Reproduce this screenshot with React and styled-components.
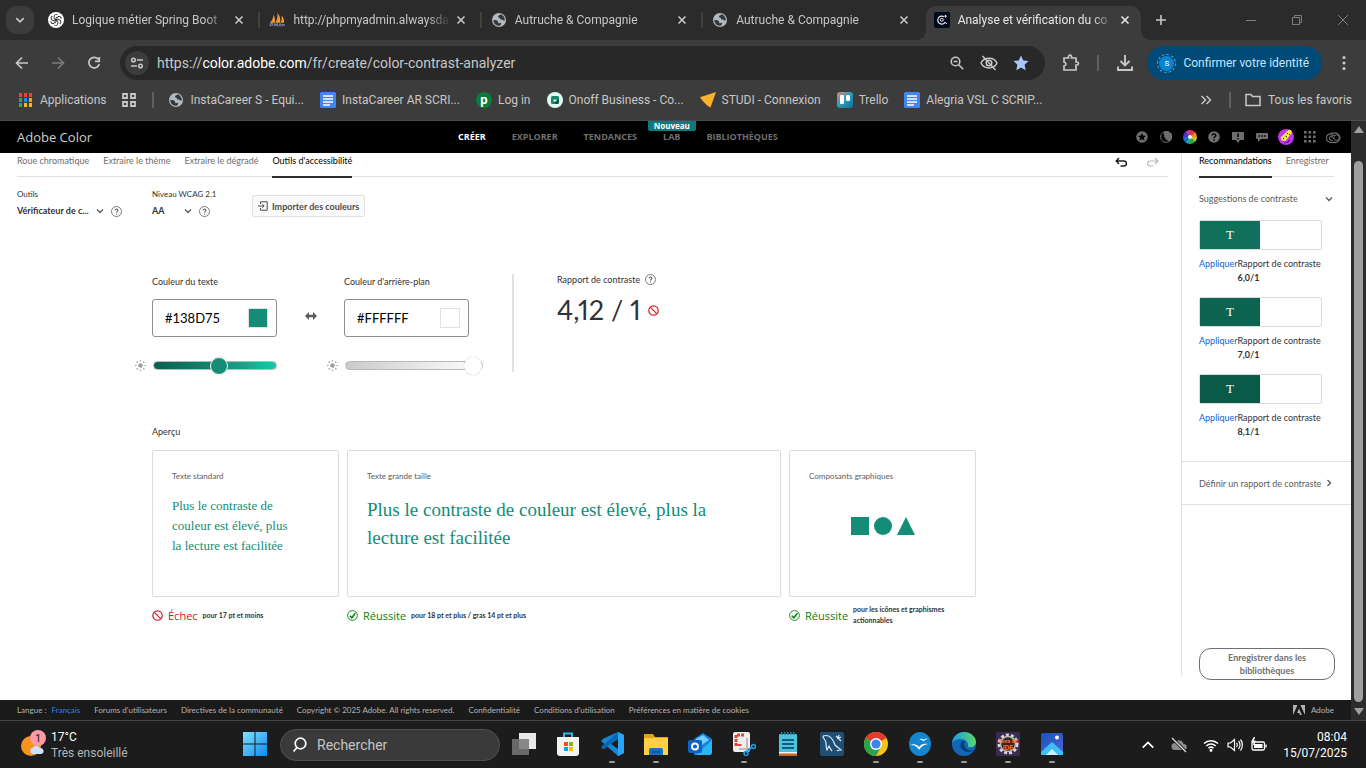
import React, { useState } from "react";
import styled, { createGlobalStyle, css } from "styled-components";

const ui = `Roboto, "Open Sans", sans-serif`;
const clean = `Lato, "Open Sans", sans-serif`;

const GlobalStyle = createGlobalStyle`
  *, *::before, *::after { box-sizing: border-box; }
  body { margin: 0; background: #1c1c1c; font-family: ${ui}; }
  button, input, select { font: inherit; color: inherit; margin: 0; padding: 0; border: 0; background: none; }
  button { cursor: pointer; }
  a { color: inherit; text-decoration: none; }
  svg { display: block; flex: none; }
  p, h1, h2, h3, ul { margin: 0; padding: 0; font-weight: inherit; font-size: inherit; }
`;

const Window = styled.div`
  display: flex;
  flex-direction: column;
  min-height: 100vh;
`;

/* ---------- browser: tab strip ---------- */

const TabStrip = styled.div`
  display: flex;
  align-items: flex-end;
  height: 40px;
  padding-left: 6px;
  background: #2b2b2b;
  color: #c7c7c7;
  font-size: 12px;
`;
const TabSearch = styled.button`
  display: grid;
  place-items: center;
  width: 28px;
  height: 28px;
  margin: 0 6px 6px 0;
  border-radius: 10px;
  background: #3c3c3c;
`;
const Tabs = styled.div`
  display: flex;
  flex: 0 1 1107px;
  min-width: 0;
`;
const TabCell = styled.div`
  display: flex;
  align-items: center;
  flex: 1 1 0;
  min-width: 0;
`;
const TabBody = styled.div`
  position: relative;
  display: flex;
  align-items: center;
  flex: 1;
  min-width: 0;
  height: 34px;
  padding: 0 8px 6px;
  ${(p) =>
    p.$active &&
    css`
      background: #3c3c3c;
      border-radius: 10px 10px 0 0;
      color: #e6e6e6;
      &::before,
      &::after {
        content: "";
        position: absolute;
        bottom: 0;
        width: 10px;
        height: 10px;
      }
      &::before {
        left: -10px;
        background: radial-gradient(circle at 0 0, transparent 10px, #3c3c3c 10px);
      }
      &::after {
        right: -10px;
        background: radial-gradient(circle at 100% 0, transparent 10px, #3c3c3c 10px);
      }
    `}
`;
const TabTitle = styled.span`
  flex: 1;
  min-width: 0;
  margin-left: 8px;
  overflow: hidden;
  white-space: nowrap;
  line-height: 18px;
  mask-image: linear-gradient(to right, #000 calc(100% - 24px), transparent);
`;
const TabClose = styled.button`
  display: grid;
  place-items: center;
  width: 16px;
  height: 16px;
  margin-left: 2px;
`;
const TabDivider = styled.span`
  width: 2px;
  height: 16px;
  margin: 0 1px 6px 3px;
  background: ${(p) => (p.$hidden ? "transparent" : "#414141")};
`;
const NewTab = styled.button`
  display: grid;
  place-items: center;
  width: 28px;
  height: 40px;
`;
const WindowControls = styled.div`
  display: flex;
  margin-left: auto;
  color: #7f7f7f;
`;
const WindowControl = styled.button`
  display: grid;
  place-items: center;
  width: 46px;
  height: 40px;
`;

/* ---------- browser: address bar ---------- */

const Toolbar = styled.div`
  display: flex;
  align-items: center;
  height: 46px;
  padding: 0 4px;
  background: #3c3c3c;
  color: #c7c7c7;
`;
const ToolButton = styled.button`
  display: grid;
  place-items: center;
  width: 36px;
  height: 34px;
  color: ${(p) => (p.$dim ? "#7c7c7c" : "inherit")};
`;
const AddressBar = styled.div`
  display: flex;
  align-items: center;
  flex: 1;
  height: 34px;
  margin: 0 8px;
  padding: 0 8px 0 5px;
  border-radius: 17px;
  background: #282828;
  font-size: 14px;
`;
const SiteInfo = styled.button`
  display: grid;
  place-items: center;
  width: 24px;
  height: 24px;
  margin-right: 8px;
  border-radius: 12px;
  background: #3c3c3c;
`;
const Url = styled.a`
  flex: 1;
  b { color: #fff; font-weight: 400; }
`;
const AddressIcon = styled.button`
  display: grid;
  place-items: center;
  width: 32px;
  height: 32px;
`;
const ToolDivider = styled.span`
  width: 2px;
  height: 16px;
  margin: 0 8px;
  background: #5f5f5f;
`;
const Profile = styled.button`
  display: flex;
  align-items: center;
  gap: 7px;
  height: 34px;
  margin: 0 4px;
  padding: 0 13px 0 10px;
  border-radius: 17px;
  background: #004a77;
  color: #c2e7ff;
  font-size: 12px;
`;
const ProfileRing = styled.span`
  display: grid;
  place-items: center;
  width: 19px;
  height: 19px;
  border: 1px dashed #6fa8cf;
  border-radius: 10px;
  span {
    width: 15px;
    height: 15px;
    border-radius: 8px;
    background: #0a84d0;
    color: #fff;
    font-size: 8px;
    line-height: 15px;
  }
`;

/* ---------- browser: bookmarks ---------- */

const Bookmarks = styled.nav`
  display: flex;
  align-items: center;
  height: 35px;
  padding: 0 14px 7px 18px;
  border-bottom: 1px solid #4b4b4b;
  background: #3c3c3c;
  color: #c7c7c7;
  font-size: 12px;
`;
const Bookmark = styled.a`
  display: flex;
  align-items: center;
  gap: 6px;
  margin-right: 16px;
  white-space: nowrap;
`;
const BookmarkDivider = styled.span`
  width: 2px;
  height: 16px;
  margin-right: 14px;
  background: #5f5f5f;
`;
const BookmarksEnd = styled.div`
  display: flex;
  align-items: center;
  margin-left: auto;
  > svg { margin-right: 17px; }
`;
const AllBookmarks = styled.button`
  display: flex;
  align-items: center;
  gap: 7px;
`;
const Badge = styled.span`
  display: grid;
  place-items: center;
  width: 16px;
  height: 16px;
  border-radius: 8px;
  background: #0b7b3e;
  color: #fff;
  font-size: 13px;
  font-weight: 700;
  line-height: 14px;
`;

/* ---------- page ---------- */

const Viewport = styled.div`
  display: flex;
  flex: 1;
  background: #fff;
`;
const Site = styled.div`
  display: flex;
  flex-direction: column;
  flex: 1;
  min-width: 0;
  font-family: ${clean};
  font-size: 9px;
  color: #323232;
`;
const SiteHeader = styled.header`
  display: flex;
  align-items: center;
  height: 32px;
  padding: 0 5px 0 17px;
  background: #000;
`;
const Brand = styled.a`
  width: 441px;
  color: #cfcfcf;
  font-family: "Open Sans", sans-serif;
  font-size: 13px;
`;
const MainNav = styled.nav`
  display: flex;
  align-items: center;
  gap: 26px;
  flex: 1;
`;
const NavLink = styled.a`
  position: relative;
  color: ${(p) => (p.$active ? "#fff" : "#6e6e6e")};
  font-family: "Open Sans", sans-serif;
  font-size: 9px;
  font-weight: 700;
  line-height: 12px;
`;
const NewBadge = styled.span`
  position: absolute;
  left: 50%;
  bottom: 12px;
  width: 48px;
  margin-left: -24px;
  border-radius: 0 0 2px 2px;
  background: #10797e;
  color: #fff;
  font-size: 8px;
  line-height: 10px;
  text-align: center;
`;
const HeaderTools = styled.div`
  display: flex;
  align-items: center;
  color: #6e6e6e;
`;
const HeaderTool = styled.button`
  display: grid;
  place-items: center;
  width: 24px;
  height: 24px;
`;

const Columns = styled.div`
  display: flex;
  flex: 1;
`;
const Main = styled.main`
  flex: 1;
  min-width: 0;
  margin-bottom: 24px;
  padding: 0 13px 0 17px;
  border-right: 1px solid #e1e1e1;
`;
const TabBar = styled.div`
  display: flex;
  gap: 14px;
  height: 24px;
  border-bottom: 1px solid #e1e1e1;
`;
const PageTab = styled.a`
  height: 25px;
  color: ${(p) => (p.$active ? "#000" : "#6e6e6e")};
  border-bottom: 2px solid ${(p) => (p.$active ? "#2c2c2c" : "transparent")};
  line-height: 16px;
  white-space: nowrap;
`;
const History = styled.div`
  display: flex;
  gap: 20px;
  margin-left: auto;
  padding-right: 9px;
  color: #1e1e1e;
  button { height: 20px; }
  button:disabled { color: #b8b8b8; }
`;
const Controls = styled.div`
  display: flex;
  padding-top: 11px;
`;
const Control = styled.div`
  width: ${(p) => p.$width}px;
  line-height: 12px;
  label { display: block; font-size: 8px; }
`;
const ControlRow = styled.div`
  display: flex;
  align-items: center;
  gap: 7px;
  height: 22px;
  svg { color: #5c5c5c; }
`;
const Select = styled.select`
  width: ${(p) => p.$width}px;
  appearance: none;
  font-weight: 700;
  color: #323232;
`;
const ImportButton = styled.button`
  display: flex;
  align-items: center;
  gap: 4px;
  height: 22px;
  margin-top: 7px;
  padding: 0 5px;
  border: 1px solid #e1e1e1;
  border-radius: 2px;
  background: #fafafa;
  font-weight: 700;
  color: #4b4b4b;
`;

const Checker = styled.section`
  display: flex;
  padding: 52px 0 0 118px;
`;
const ColorField = styled.div`
  width: 142px;
`;
const ColorLabel = styled.label`
  display: block;
  padding: 2px 0 0 17px;
  line-height: 12px;
`;
const ColorBox = styled.div`
  display: flex;
  align-items: center;
  height: 38px;
  margin: 11px 0 0 17px;
  padding: 0 8px 0 12px;
  border: 1px solid #8e8e8e;
  border-radius: 3px;
`;
const HexInput = styled.input`
  flex: 1;
  min-width: 0;
  color: #000;
  font-size: 13px;
  outline: 0;
`;
const Swatch = styled.button`
  width: 20px;
  height: 20px;
  border: 1px solid #e1e1e1;
  background: ${(p) => p.$color};
`;
const SliderRow = styled.div`
  display: flex;
  align-items: center;
  gap: 7px;
  height: 14px;
  margin-top: 21px;
  color: #a0a0a0;
`;
const Slider = styled.input`
  flex: none;
  appearance: none;
  width: ${(p) => p.$width}px;
  height: 20px;
  &::-webkit-slider-runnable-track {
    height: 9px;
    border: 1px solid #b9b9b9;
    border-radius: 5px;
    background: ${(p) => p.$track};
  }
  &::-webkit-slider-thumb {
    appearance: none;
    width: 18px;
    height: 18px;
    margin-top: -5px;
    border: 1px solid #fff;
    border-radius: 9px;
    background: ${(p) => p.$color};
    box-shadow: 0 0 1px rgba(0, 0, 0, 0.35);
  }
`;
const SwapButton = styled.button`
  display: grid;
  place-items: center;
  width: 50px;
  height: 20px;
  margin-top: 32px;
  padding-left: 18px;
  color: #5c5c5c;
`;
const Ratio = styled.div`
  margin-left: 43px;
  padding-left: 43px;
  border-left: 2px solid #e1e1e1;
`;
const RatioLabel = styled.div`
  display: flex;
  align-items: center;
  gap: 5px;
  height: 10px;
  svg { color: #5c5c5c; }
`;
const RatioValue = styled.div`
  display: flex;
  align-items: center;
  gap: 7px;
  margin-top: 8px;
  font-size: 27px;
  font-variant-numeric: proportional-nums;
  line-height: 36px;
`;

const Preview = styled.section`
  padding: 54px 0 0 135px;
  h2 { line-height: 12px; }
`;
const Cards = styled.div`
  display: grid;
  grid-template-columns: 187px 434px 187px;
  gap: 0 8px;
  margin-top: 12px;
`;
const Card = styled.article`
  height: 147px;
  padding: 19px;
  border: 1px solid #dcdcdc;
  border-radius: 2px;
  h3 { color: #5c5c5c; font-size: 8px; line-height: 12px; }
`;
const Sample = styled.p`
  width: ${(p) => (p.$large ? 360 : 124)}px;
  margin-top: 14px;
  color: #138d75;
  font-family: "Liberation Serif", serif;
  font-size: ${(p) => (p.$large ? 19 : 13)}px;
  line-height: ${(p) => (p.$large ? 28 : 20)}px;
`;
const Shapes = styled.div`
  display: flex;
  justify-content: center;
  margin-top: 35px;
`;
const Verdict = styled.div`
  display: flex;
  align-items: center;
  gap: 5px;
  height: 22px;
  margin-top: 7px;
  color: ${(p) => (p.$pass ? "#008505" : "#d0121f")};
  font-family: "Open Sans", sans-serif;
  font-size: 11px;
`;
const VerdictNote = styled.span`
  max-width: ${(p) => (p.$wide ? "none" : "100px")};
  color: #323232;
  font-family: ${clean};
  font-size: 7px;
  font-weight: 700;
  line-height: 11px;
`;

const Side = styled.aside`
  display: flex;
  flex-direction: column;
  width: 169px;
  padding-bottom: 20px;
`;
const SideTabs = styled(TabBar)`
  margin: 0 17px;
`;
const Disclosure = styled.button`
  display: flex;
  align-items: center;
  justify-content: space-between;
  height: 43px;
  padding: 0 18px 0 17px;
  color: #5c5c5c;
  ${(p) => p.$ruled && "height: 44px; margin-top: 22px; border: 1px solid #e1e1e1; border-width: 1px 0;"}
`;
const Suggestion = styled.div`
  padding: 0 29px 0 17px;
  & + & { margin-top: 12px; }
`;
const Pair = styled.div`
  display: flex;
  height: 30px;
  border: 1px solid #dcdcdc;
  border-radius: 2px;
  span {
    width: 60px;
    background: ${(p) => p.$color};
    color: #fff;
    font-family: "Liberation Serif", serif;
    font-size: 13px;
    line-height: 28px;
    text-align: center;
  }
`;
const Advice = styled.div`
  display: flex;
  margin-top: 7px;
  line-height: 14px;
  white-space: nowrap;
  button { align-self: flex-start; color: #0d5fd8; line-height: 14px; }
  b { display: block; }
`;
const SaveButton = styled.button`
  height: 32px;
  margin: auto 16px 0 17px;
  padding: 0 22px;
  border: 1px solid #6e6e6e;
  border-radius: 12px;
  color: #6e6e6e;
  font-weight: 700;
  line-height: 13px;
`;

const SiteFooter = styled.footer`
  display: flex;
  align-items: center;
  gap: 14px;
  height: 20px;
  padding: 0 17px;
  background: #1a1a1a;
  color: #b4b4b4;
  font-size: 8px;
  span a { margin-left: 3px; color: #2a83f5; }
`;
const AdobeMark = styled.a`
  display: flex;
  align-items: center;
  gap: 6px;
  margin-left: auto;
`;
const Scrollbar = styled.div`
  display: flex;
  flex-direction: column;
  align-items: center;
  width: 15px;
  padding: 5px 0;
  background: #2c2c2c;
  color: #9f9f9f;
  &::before, &::after {
    content: "";
    border: 5px solid transparent;
    border-top-width: 0;
    border-bottom: 7px solid currentColor;
  }
  &::after {
    border-top: 7px solid currentColor;
    border-bottom-width: 0;
  }
`;
const ScrollThumb = styled.div`
  flex: 1;
  width: 9px;
  margin: 28px 0 6px;
  border-radius: 5px;
  background: #9f9f9f;
`;

/* ---------- taskbar ---------- */

const Taskbar = styled.footer`
  display: flex;
  align-items: center;
  height: 48px;
  border-top: 1px solid #444;
  background: #1c1c1c;
  color: #fff;
  font-size: 12px;
`;
const Weather = styled.button`
  display: flex;
  align-items: center;
  gap: 5px;
  width: 233px;
  padding-left: 20px;
  line-height: 16px;
  text-align: left;
  small { display: block; color: #b5b5b5; font-size: 12px; }
`;
const TaskSlot = styled.button`
  display: flex;
  flex-direction: column;
  align-items: center;
  width: 44px;
  height: 47px;
  padding-top: 11px;
  &::after {
    content: "";
    width: 6px;
    height: 2px;
    margin-top: 5px;
    border-radius: 1px;
    background: ${(p) => (p.$open ? "#9a9a9a" : "transparent")};
  }
`;
const TaskSearch = styled.label`
  display: flex;
  align-items: center;
  gap: 9px;
  width: 220px;
  height: 32px;
  margin: 0 2px 0 3px;
  padding: 0 11px;
  border: 1px solid #505050;
  border-radius: 16px;
  background: #3a3a3a;
  input { min-width: 0; width: 160px; font-size: 14px; outline: 0; }
  input::placeholder { color: #c4c4c4; opacity: 1; }
`;
const Tray = styled.div`
  display: flex;
  align-items: center;
  gap: 8px;
  margin-left: auto;
  padding-right: 19px;
`;
const TrayButton = styled.button`
  margin-right: ${(p) => p.$space || 0}px;
`;
const Clock = styled.time`
  width: 64px;
  line-height: 16px;
  text-align: right;
  white-space: nowrap;
`;

/* ---------- icons ---------- */

const Line = ({ d, size = 16, w = 1.5, box = 16, children, ...rest }) => (
  <svg width={size} height={size} viewBox={`0 0 ${box} ${box}`} fill="none" stroke="currentColor" strokeWidth={w} {...rest}>
    {d && <path d={d} />}
    {children}
  </svg>
);
const Close = () => <Line size={10} box={10} w={1.6} d="M1.5 1.5l7 7M8.5 1.5l-7 7" />;
const Chevron = ({ dir = "down", size = 8, w = 1.4 }) => (
  <Line size={size} box={8} w={w} d={{ down: "M1 2.5l3 3 3-3", right: "M2.5 1l3 3-3 3", up: "M1 5.5l3-3 3 3" }[dir]} />
);
const Help = () => (
  <Line size={11} box={11} w={0.8}>
    <circle cx="5.5" cy="5.5" r="5" />
    <path d="M4.200 4.300c0-1.700 2.700-1.700 2.700 0 0 1-1.300 1.100-1.300 2.100M5.600 7.400v1.100" strokeWidth="1.100" />
  </Line>
);
const NoEntry = () => (
  <Line size={11} box={11} w={1.2} color="#d7202f">
    <circle cx="5.5" cy="5.5" r="4.700" />
    <path d="M2.200 2.200l6.600 6.600" />
  </Line>
);
const Pass = () => (
  <Line size={11} box={11} w={0.9}>
    <circle cx="5.5" cy="5.5" r="4.900" />
    <path d="M2.800 5.800l2 2 3.600-4.600" strokeWidth="1.500" />
  </Line>
);
const Globe = () => (
  <svg width="16" height="16" viewBox="0 0 16 16">
    <circle cx="8" cy="8" r="7" fill="#b4b9c0" />
    <path d="M2.300 8.300c1.500-.4 3.200-.3 4.200.4 1 .8.200 2 1.200 2.500 1 .4 1.400-1 2.300-.3.9.8-.7 1.600-.8 2.700C6 14.500 2.600 12.300 2.300 8.300zM9.600 2.300C9.300 3.400 7 3.200 7 4.700c0 1 1.500.7 1.800 1.500.3.9.4 1.400 1.500 1.300 1-.1 1.300.6 2 .9.6.2 1.200 0 1.500-.2.100-2.700-1.800-5.200-4.200-5.900z" fill="#34373b" />
  </svg>
);
const Doc = () => (
  <svg width="16" height="16" viewBox="0 0 16 16">
    <rect width="16" height="16" rx="1.5" fill="#4285f4" />
    <path d="M3 4h10M3 7h10M3 10h10M3 13h7" stroke="#fff" strokeWidth="1.5" />
  </svg>
);
const ChatGpt = () => (
  <svg width="16" height="16" viewBox="0 0 16 16">
    <circle cx="8" cy="8" r="8" fill="#fff" />
    <g fill="none" stroke="#222" strokeWidth="0.9">
      {[0, 60, 120, 180, 240, 300].map((a) => (
        <path key={a} transform={`rotate(${a} 8 8)`} d="M6.200 7V4.200a2 2 0 0 1 3.300-1.200M6.200 7l2.500 1.400" />
      ))}
    </g>
  </svg>
);
const PhpMyAdmin = () => (
  <svg width="16" height="16" viewBox="0 0 18 16">
    <path d="M1 11C4 8 5 5 5 2c2 3 2 6 1.500 9zM7 11c2.500-4 3-7 2.500-11 3 3 3.500 7 3 11zM13 11c1.500-2 1.500-5 1-8 2.500 2 3 5 3 8z" fill="#f29a2e" />
    <path d="M1 15l1-3h2v2H2M6 15l.5-3 1.500 2 1.500-2v3M11 15l1.500-3 1 3M15 15v-2h2v2" fill="none" stroke="#7c7fa8" strokeWidth="1.200" />
  </svg>
);
const ColorFav = () => (
  <svg width="16" height="16" viewBox="0 0 16 16">
    <rect width="16" height="16" rx="2" fill="#020a1f" />
    <path d="M10 4.800A4 4 0 1 0 11.300 10" fill="none" stroke="#e8e8e8" strokeWidth="1.200" />
    <circle cx="7.800" cy="7.800" r="1.500" fill="none" stroke="#e8e8e8" strokeWidth="1" />
    <path d="M11.500 3v2.500M10.300 4.200h2.500M11 10l1.800 2" stroke="#e8e8e8" strokeWidth="1" />
  </svg>
);
const AppsGrid = () => {
  const colors = ["#ea4335", "#ea4335", "#ea4335", "#34a853", "#1a8cff", "#f9a01b", "#34a853", "#fbbc04", "#fbbc04"];
  return (
    <svg width="16" height="14" viewBox="0 0 16 14">
      {colors.map((c, i) => (
        <rect key={i} x={1 + (i % 3) * 5} y={Math.floor(i / 3) * 5} width="3" height="4" fill={c} />
      ))}
    </svg>
  );
};
const Grid4 = () => (
  <Line size={14} box={14} w={1.8} d="M1 1h4v4H1zM9 1h4v4H9zM1 9h4v4H1zM9 9h4v4H9z" />
);
const Onoff = () => (
  <svg width="16" height="16" viewBox="0 0 16 16">
    <circle cx="8" cy="8" r="8" fill="#dffaf0" />
    <rect x="4" y="4" width="8" height="8" rx="1.5" fill="#128a66" />
    <path d="M8 8h4v2.500L10.500 12H8z" fill="#0b4f4a" />
    <path d="M6.500 7.500h3v2h-3z" fill="#dffaf0" />
  </svg>
);
const Studi = () => (
  <svg width="16" height="16" viewBox="0 0 16 16"><path d="M0 5.200L16 0l-5.500 15.500C7 14 2 8.500 0 5.200z" fill="#fbb12b" /></svg>
);
const Trello = () => (
  <svg width="16" height="16" viewBox="0 0 16 16">
    <defs><linearGradient id="tr" x2="1" y2="1"><stop stopColor="#e8836b" /><stop offset=".45" stopColor="#2ca0b8" /><stop offset="1" stopColor="#0d6fa0" /></linearGradient></defs>
    <rect width="16" height="16" rx="3" fill="url(#tr)" />
    <rect x="3" y="3" width="4" height="9" rx="1" fill="#fff" /><rect x="9" y="3" width="4" height="6" rx="1" fill="#fff" />
  </svg>
);
const WheelIcon = () => (
  <svg width="14" height="14" viewBox="0 0 14 14">
    {["#e8324a", "#f58a1f", "#b8c92a", "#2fa84a", "#18a7a0", "#1f6ae0", "#4736d0", "#b637c0"].map((c, i) => (
      <path key={c} transform={`rotate(${i * 45} 7 7)`} d="M7 7V0a7 7 0 0 1 4.950 2.050z" fill={c} />
    ))}
    <circle cx="7" cy="7" r="2" fill="#fff" />
  </svg>
);
const Avatar = () => (
  <svg width="16" height="16" viewBox="0 0 16 16">
    <circle cx="8" cy="8" r="8" fill="#c433f0" />
    <path d="M2.500 8.500L10.500 1c2-1 4 1 3 3.500l-6 7.500-4-.5z" fill="#f5e64a" />
    <path d="M5 9l1 1M9 4l1 1M11 5l1 1M7.500 7l1.500 1" stroke="#222" strokeWidth="1" />
    <path d="M6 14.500l2-2 1.500 1.500 1.500-3 1 1" fill="none" stroke="#4b1580" strokeWidth="1" />
  </svg>
);
const CreativeCloud = () => (
  <svg width="16" height="12" viewBox="0 0 16 12" fill="none" stroke="currentColor" strokeWidth="1.100">
    <path d="M4.500 11.400h6.200a4.800 4.800 0 1 0-3.300-9.200A4.800 4.800 0 0 0 3.900 2.900a4.300 4.300 0 0 0 .6 8.500z" />
    <path d="M8.800 8.300L6.600 6A1.900 1.900 0 1 0 5.200 9.300h1.600M8 5.500l.8-.8a2.700 2.700 0 1 1 0 3.900M4.500 4.200A3.500 3.500 0 0 1 8 4.600" />
  </svg>
);

/* ---------- data ---------- */

const tabs = [
  { icon: <ChatGpt />, title: "Logique métier Spring Boot" },
  { icon: <PhpMyAdmin />, title: "http://phpmyadmin.alwaysda" },
  { icon: <Globe />, title: "Autruche & Compagnie" },
  { icon: <Globe />, title: "Autruche & Compagnie" },
  { icon: <ColorFav />, title: "Analyse et vérification du co", active: true },
];
const bookmarks = [
  { icon: <Globe />, title: "InstaCareer S - Equi..." },
  { icon: <Doc />, title: "InstaCareer AR SCRI..." },
  { icon: <Badge>p</Badge>, title: "Log in" },
  { icon: <Onoff />, title: "Onoff Business - Co..." },
  { icon: <Studi />, title: "STUDI - Connexion" },
  { icon: <Trello />, title: "Trello" },
  { icon: <Doc />, title: "Alegria VSL C SCRIP..." },
];
const suggestions = [
  { color: "#10705c", ratio: "6,0/1" },
  { color: "#0c6450", ratio: "7,0/1" },
  { color: "#0a5a4a", ratio: "8,1/1" },
];
const footerLinks = ["Forums d'utilisateurs", "Directives de la communauté", "Copyright © 2025 Adobe. All rights reserved.", "Confidentialité", "Conditions d'utilisation", "Préférences en matière de cookies"];

const A = (children) => <svg width="24" height="24" viewBox="0 0 24 24">{children}</svg>;
const apps = [
  { name: "Vue des tâches", icon: A(<><rect x="7" y="1" width="17" height="16" fill="#e8e8e8" /><rect x="0" y="7" width="17" height="16" fill="#777" opacity=".85" /></>) },
  { name: "Store", icon: A(<><path d="M8 6V1.500h8V6" fill="none" stroke="#35b5ef" strokeWidth="2" /><path d="M1 5h22v16a3 3 0 0 1-3 3H4a3 3 0 0 1-3-3z" fill="#f4f4f4" /><path d="M8 10h4v4H8z" fill="#f25022" /><path d="M13 10h4v4h-4z" fill="#7fba00" /><path d="M8 15h4v4H8z" fill="#00a4ef" /><path d="M13 15h4v4h-4z" fill="#ffb900" /></>) },
  { name: "Visual Studio Code", open: true, icon: A(<><path d="M18 0l6 3v18l-6 3L1 9l2.500-2.500z" fill="#1487d4" /><path d="M18 0v6.500L3.500 17.500 1 15z" fill="#0a66b0" /><path d="M18 0l6 3v18l-6 3z" fill="#2aa5f5" /><path d="M18 7v10l-7-5z" fill="#1c1c1c" /></>) },
  { name: "Explorateur", open: true, icon: A(<><path d="M0 2h9l2 3h13v18H0z" fill="#e0a11b" /><path d="M0 6h24v17H0z" fill="#ffcf48" /><path d="M5 23v-5a2 2 0 0 1 2-2h10a2 2 0 0 1 2 2v5z" fill="#1272c4" /><path d="M8 20h8" stroke="#0b4f93" strokeWidth="1.500" /></>) },
  { name: "Outlook", icon: A(<><path d="M6 7l9-6 9 6v13a3 3 0 0 1-3 3H6z" fill="#1583dd" /><path d="M8 7l7-4 6 5-13 9z" fill="#6fd0ff" /><path d="M24 8v12a3 3 0 0 1-3 3H8z" fill="#28b5f0" /><rect y="8" width="14" height="13" rx="2" fill="#0d62c4" /><circle cx="7" cy="14.500" r="3" fill="none" stroke="#fff" strokeWidth="1.800" /></>) },
  { name: "Capture", open: true, icon: A(<><rect x="1" y="0" width="17" height="20" rx="2" fill="#eee" /><path d="M4 14V3h9" fill="none" stroke="#e2472d" strokeWidth="3" strokeDasharray="3 1" /><path d="M4.500 13h5" stroke="#e2472d" strokeWidth="2" /><path d="M15 6v10M7 17h10" stroke="#bbb" strokeWidth="2" /><path d="M14 20l6-5" stroke="#1b9de0" strokeWidth="2" /><circle cx="21.500" cy="14.500" r="2" fill="none" stroke="#1b9de0" strokeWidth="1.600" /><circle cx="14" cy="21.500" r="2" fill="none" stroke="#1b9de0" strokeWidth="1.600" /></>) },
  { name: "Bloc-notes", icon: A(<><rect x="3" y="2" width="18" height="22" rx="1" fill="#4ec3e0" /><rect x="3" y="21" width="18" height="3" fill="#c26a25" /><rect x="3" y="20" width="18" height="1.500" fill="#f3f3f3" /><path d="M6 8h12M6 12h12M6 16h12" stroke="#10627c" strokeWidth="1.800" /><path d="M5 1.500h14" stroke="#1a7d9c" strokeWidth="3" strokeDasharray="1.500 1.500" /></>) },
  { name: "MySQL Workbench", icon: A(<><rect x="0" y="0" width="24" height="24" rx="2" fill="#1f4f75" /><path d="M3 4c6-2 10 3 12 9 2 2 4 3 6 5-2 0-3 0-4 1M3 4c0 3 3 4 3 7s0 5 1 7l2-4c1 2 2 4 3 5M16 4l5 5M19 3l-1 3 3-1" fill="none" stroke="#dce9f2" strokeWidth="1.200" /></>) },
  { name: "Chrome", open: true, icon: A(<><circle cx="12" cy="12" r="12" fill="#fbc116" /><path d="M12 12L1.600 6A12 12 0 0 1 22.400 6z" fill="#e33b2e" /><path d="M1.600 6A12 12 0 0 0 12 24l5-9-5-3z" fill="#2ba24c" /><circle cx="12" cy="12" r="6" fill="#fff" /><circle cx="12" cy="12" r="4.600" fill="#3f82f0" /></>) },
  { name: "OpenOffice", open: true, icon: A(<><ellipse cx="12" cy="12" rx="11" ry="12" fill="#1286cf" /><path d="M11 7.500c2-1.500 3.500-.8 4.500.3 1-1 3-1.500 4.500-.8-2 .2-3.500 1-4.500 2.500-1-1.500-2.500-2-4.500-2zM2 13c4-1.500 7-.5 9 2 2-3 5-4 9-3-4 .5-7 2.500-9 6-2-4-5-5-9-5z" fill="#fff" /></>) },
  { name: "Edge", open: true, icon: A(<><defs><linearGradient id="ed" x2="1"><stop stopColor="#1b9de2" /><stop offset="1" stopColor="#57d66a" /></linearGradient></defs><circle cx="12" cy="12" r="12" fill="#1266b8" /><path d="M0 11C1 4 6 0 12 0c7 0 12 5 12 10 0 4-4 6-8 5 1-5-3-8-7-8-5 0-8 2-9 4z" fill="url(#ed)" /><path d="M10 9c-4 5 0 11 6 11 3 0 5-1 6-2-3 1-8 0-9-3-1-2-1-4 0-6z" fill="#0b3f7a" /></>) },
  { name: "Eclipse", open: true, icon: <svg width="24" height="24" viewBox="0 0 24 24"><rect width="24" height="24" rx="1" fill="#3c2a55" /><circle cx="12" cy="12" r="9" fill="none" stroke="#d8d4d0" strokeWidth="3" strokeDasharray="3 2" /><circle cx="12" cy="12" r="7.500" fill="#33242e" stroke="#bdb8b5" strokeWidth="1.500" /><text x="12" y="11" textAnchor="middle" fontSize="6" fontWeight="700" fill="#ee7a1c">Java EE</text><text x="12" y="18" textAnchor="middle" fontSize="7" fontWeight="700" fill="#ee7a1c">IDE</text></svg> },
  { name: "Photos", open: true, icon: A(<><defs><linearGradient id="ph" x2=".6" y2="1"><stop stopColor="#1556b8" /><stop offset="1" stopColor="#4d5fd8" /></linearGradient></defs><rect x="1" y="1" width="22" height="22" rx="2" fill="url(#ph)" /><path d="M1 20l11-10 11 10v3H1z" fill="#3fc0f5" /><path d="M6 23l6-6 6 6z" fill="#c9f0ff" /><circle cx="17" cy="5.500" r="2" fill="#fff" /></>) },
];

/* ---------- sections ---------- */

const BrowserChrome = () => (
  <>
    <TabStrip>
      <TabSearch aria-label="Rechercher dans les onglets"><Chevron size={10} /></TabSearch>
      <Tabs>
        {tabs.map((t, i) => (
          <TabCell key={i}>
            <TabBody $active={t.active}>
              {t.icon}
              <TabTitle>{t.title}</TabTitle>
              <TabClose aria-label="Fermer l'onglet"><Close /></TabClose>
            </TabBody>
            <TabDivider $hidden={i > 2} />
          </TabCell>
        ))}
      </Tabs>
      <NewTab aria-label="Nouvel onglet"><Line size={12} box={12} w={1.6} d="M6 1v10M1 6h10" /></NewTab>
      <WindowControls>
        <WindowControl aria-label="Réduire"><Line size={10} box={10} w={1} d="M0 5.500h10" /></WindowControl>
        <WindowControl aria-label="Restaurer"><Line size={10} box={10} w={1} d="M.5 2.500h7v7h-7zM2.500 2.500V.5h7v7h-2" /></WindowControl>
        <WindowControl aria-label="Fermer"><Line size={10} box={10} w={1} d="M0 0l10 10M10 0L0 10" /></WindowControl>
      </WindowControls>
    </TabStrip>
    <Toolbar>
      <ToolButton aria-label="Retour"><Line d="M14 8H3M8 2.500L2.500 8 8 13.500" w={1.7} /></ToolButton>
      <ToolButton $dim aria-label="Suivant"><Line d="M2 8h11M8 2.500L13.500 8 8 13.500" w={1.7} /></ToolButton>
      <ToolButton aria-label="Actualiser"><Line d="M12.500 4.500A5.300 5.300 0 1 0 13.300 9M13.300 2v4.300H9" w={1.7} /></ToolButton>
      <AddressBar>
        <SiteInfo aria-label="Informations sur le site">
          <Line size={14} box={14} w={1.5}><circle cx="3.500" cy="4" r="1.800" /><circle cx="10.500" cy="10" r="1.800" /><path d="M7 4h6M1 10h6" /></Line>
        </SiteInfo>
        <Url href="#">https://<b>color.adobe.com</b>/fr/create/color-contrast-analyzer</Url>
        <AddressIcon aria-label="Zoom"><Line w={1.6}><circle cx="6.500" cy="6.500" r="4.300" /><path d="M9.700 9.700l4.500 4.500M4.500 6.500h4" /></Line></AddressIcon>
        <AddressIcon aria-label="Cookies tiers bloqués">
          <Line size={18} box={18} w={1.5}><path d="M1 9c3-6.500 13-6.500 16 0-3 6.500-13 6.500-16 0zM2.500 2l13 14" /><circle cx="9" cy="9" r="2.800" /></Line>
        </AddressIcon>
        <AddressIcon aria-label="Favori">
          <svg width="16" height="16" viewBox="0 0 16 16"><path d="M8 .5l2.300 5 5.200.6-3.900 3.700 1.100 5.500L8 12.500l-4.700 2.800 1.100-5.500L.5 6.100l5.200-.6z" fill="#a8c7fa" /></svg>
        </AddressIcon>
      </AddressBar>
      <ToolButton aria-label="Extensions"><Line size={18} box={18} w={1.7} d="M2 4h4.500V2.500a1.500 1.500 0 0 1 3 0V4H14v4h1a1.500 1.500 0 0 1 0 3h-1v5H2v-4c2.500-.5 2.500-3.500 0-4z" /></ToolButton>
      <ToolDivider />
      <ToolButton aria-label="Téléchargements"><Line size={18} box={18} w={1.9} d="M9 1v10M4.500 7L9 11.500 13.500 7M2 12.500V16h14v-3.500" /></ToolButton>
      <Profile><ProfileRing><span>S</span></ProfileRing>Confirmer votre identité</Profile>
      <ToolButton aria-label="Menu"><svg width="4" height="16" viewBox="0 0 4 16" fill="currentColor"><circle cx="2" cy="2.500" r="1.600" /><circle cx="2" cy="8" r="1.600" /><circle cx="2" cy="13.500" r="1.600" /></svg></ToolButton>
    </Toolbar>
    <Bookmarks>
      <Bookmark href="#"><AppsGrid />Applications</Bookmark>
      <Bookmark href="#" aria-label="Groupes"><Grid4 /></Bookmark>
      <BookmarkDivider />
      {bookmarks.map((b) => <Bookmark href="#" key={b.title}>{b.icon}{b.title}</Bookmark>)}
      <BookmarksEnd>
        <Line size={12} box={12} w={1.5} d="M1.500 2l4 4-4 4M6.500 2l4 4-4 4" />
        <BookmarkDivider />
        <AllBookmarks><Line w={1.5} d="M1 2.500h5l1.500 2H15v9H1z" />Tous les favoris</AllBookmarks>
      </BookmarksEnd>
    </Bookmarks>
  </>
);

const Header = () => (
  <SiteHeader>
    <Brand href="#">Adobe Color</Brand>
    <MainNav>
      <NavLink href="#" $active>CRÉER</NavLink>
      <NavLink href="#">EXPLORER</NavLink>
      <NavLink href="#">TENDANCES</NavLink>
      <NavLink href="#">LAB<NewBadge>Nouveau</NewBadge></NavLink>
      <NavLink href="#">BIBLIOTHÈQUES</NavLink>
    </MainNav>
    <HeaderTools>
      <HeaderTool aria-label="Nouveautés"><svg width="12" height="12" viewBox="0 0 12 12"><circle cx="6" cy="6" r="5.800" fill="currentColor" /><path d="M6 2l1.200 2.600 2.800.3-2.100 1.900.6 2.800L6 8.200 3.500 9.600l.6-2.800L2 4.900l2.800-.3z" fill="#000" /></svg></HeaderTool>
      <HeaderTool aria-label="Thème"><svg width="12" height="12" viewBox="0 0 12 12"><circle cx="6" cy="6" r="5.400" fill="none" stroke="currentColor" /><path d="M4 .8a5.500 5.500 0 0 1 5.500 9.600C5 9 3 5 4 .8z" fill="currentColor" /></svg></HeaderTool>
      <HeaderTool aria-label="Roue"><WheelIcon /></HeaderTool>
      <HeaderTool aria-label="Aide"><svg width="12" height="12" viewBox="0 0 12 12"><circle cx="6" cy="6" r="5.800" fill="currentColor" /><path d="M4.200 4.600c0-2.200 3.600-2.200 3.600-.1C7.800 5.800 6 5.700 6 7.200M6 8.300v1.400" fill="none" stroke="#000" strokeWidth="1.400" /></svg></HeaderTool>
      <HeaderTool aria-label="Commentaires"><svg width="12" height="12" viewBox="0 0 12 12"><path d="M0 1h12v8H8l-2 3-2-3H0z" fill="currentColor" /><path d="M6 2.500v3.500M6 7v1.300" stroke="#000" strokeWidth="1.500" /></svg></HeaderTool>
      <HeaderTool aria-label="Forum"><svg width="12" height="12" viewBox="0 0 12 12"><path d="M1 2h10a1 1 0 0 1 1 1v4a1 1 0 0 1-1 1H5l-3 3V8H1a1 1 0 0 1-1-1V3a1 1 0 0 1 1-1z" fill="currentColor" /><path d="M2.500 5h7" stroke="#000" strokeWidth="1.400" strokeDasharray="1.400 1.400" /></svg></HeaderTool>
      <HeaderTool aria-label="Compte"><Avatar /></HeaderTool>
      <HeaderTool aria-label="Applications"><svg width="12" height="12" viewBox="0 0 12 12" fill="currentColor">{[0, 1, 2, 3, 4, 5, 6, 7, 8].map((i) => <rect key={i} x={(i % 3) * 4.5} y={Math.floor(i / 3) * 4.5} width="2.600" height="2.600" />)}</svg></HeaderTool>
      <HeaderTool aria-label="Creative Cloud"><CreativeCloud /></HeaderTool>
    </HeaderTools>
  </SiteHeader>
);

const Sun = () => (
  <svg width="11" height="11" viewBox="0 0 11 11">
    <circle cx="5.500" cy="5.500" r="2.300" fill="currentColor" />
    {[0, 45, 90, 135, 180, 225, 270, 315].map((a) => <circle key={a} cx="5.500" cy=".8" r=".8" fill="currentColor" transform={`rotate(${a} 5.5 5.5)`} />)}
  </svg>
);

const ColorPicker = ({ id, label, value, level, track, width }) => {
  const [hex, setHex] = useState(value);
  const [pos, setPos] = useState(level);
  return (
    <ColorField>
      <ColorLabel htmlFor={id}>{label}</ColorLabel>
      <ColorBox>
        <HexInput id={id} value={hex} onChange={(e) => setHex(e.target.value)} />
        <Swatch $color={value} aria-label={label} />
      </ColorBox>
      <SliderRow>
        <Sun />
        <Slider type="range" aria-label={`Luminosité, ${label}`} value={pos} onChange={(e) => setPos(e.target.value)} $color={value} $track={track} $width={width} />
      </SliderRow>
    </ColorField>
  );
};

const Workspace = () => (
  <Main>
    <TabBar>
      <PageTab href="#">Roue chromatique</PageTab>
      <PageTab href="#">Extraire le thème</PageTab>
      <PageTab href="#">Extraire le dégradé</PageTab>
      <PageTab href="#" $active>Outils d'accessibilité</PageTab>
      <History>
        <button aria-label="Annuler"><Line size={12} box={12} w={1.4} d="M4 1L1.200 4 4 7M1.200 4H9a2.200 2.200 0 0 1 0 5H5.500" /></button>
        <button aria-label="Rétablir" disabled><Line size={12} box={12} w={1.2} d="M8 1l2.800 3L8 7M10.800 4H3a2.200 2.200 0 0 0 0 5h3.500" /></button>
      </History>
    </TabBar>
    <Controls>
      <Control $width={135}>
        <label htmlFor="tool">Outils</label>
        <ControlRow>
          <Select id="tool" $width={72}><option>Vérificateur de c...</option></Select>
          <Chevron /><Help />
        </ControlRow>
      </Control>
      <Control $width={100}>
        <label htmlFor="level">Niveau WCAG 2.1</label>
        <ControlRow>
          <Select id="level" $width={25}><option>AA</option></Select>
          <Chevron /><Help />
        </ControlRow>
      </Control>
      <ImportButton>
        <Line size={10} box={10} w={1} d="M2.500 3V.8h6.700v8.400H2.500V7M0 5h6M4.300 3.200L6.200 5 4.300 6.800" />
        Importer des couleurs
      </ImportButton>
    </Controls>
    <Checker>
      <ColorPicker id="text" label="Couleur du texte" value="#138D75" level={54} track="linear-gradient(to right, #0a5f4f, #138d75 55%, #1cc7a5)" width={124} />
      <SwapButton aria-label="Inverser">
        <svg width="12" height="8" viewBox="0 0 12 8"><path d="M0 4l4-4v2.700h4V0l4 4-4 4V5.300H4V8z" fill="currentColor" /></svg>
      </SwapButton>
      <ColorPicker id="back" label="Couleur d'arrière-plan" value="#FFFFFF" level={100} track="linear-gradient(to right, #cacaca, #fff)" width={138} />
      <Ratio>
        <RatioLabel>Rapport de contraste<Help /></RatioLabel>
        <RatioValue>4,12 / 1<NoEntry /></RatioValue>
      </Ratio>
    </Checker>
    <Preview>
      <h2>Aperçu</h2>
      <Cards>
        <Card><h3>Texte standard</h3><Sample>Plus le contraste de couleur est élevé, plus la lecture est facilitée</Sample></Card>
        <Card><h3>Texte grande taille</h3><Sample $large>Plus le contraste de couleur est élevé, plus la lecture est facilitée</Sample></Card>
        <Card>
          <h3>Composants graphiques</h3>
          <Shapes><svg width="64" height="19" viewBox="0 0 64 19" fill="#138d75"><rect y="0" width="18" height="18" /><circle cx="32" cy="9" r="9" /><path d="M55 0l9 18H46z" /></svg></Shapes>
        </Card>
        <Verdict><NoEntry />Échec<VerdictNote>pour 17 pt et moins</VerdictNote></Verdict>
        <Verdict $pass><Pass />Réussite<VerdictNote $wide>pour 18 pt et plus / gras 14 pt et plus</VerdictNote></Verdict>
        <Verdict $pass><Pass />Réussite<VerdictNote>pour les icônes et graphismes actionnables</VerdictNote></Verdict>
      </Cards>
    </Preview>
  </Main>
);

const Sidebar = () => (
  <Side>
    <SideTabs>
      <PageTab href="#" $active>Recommandations</PageTab>
      <PageTab href="#">Enregistrer</PageTab>
    </SideTabs>
    <Disclosure>Suggestions de contraste<Chevron /></Disclosure>
    {suggestions.map((s) => (
      <Suggestion key={s.ratio}>
        <Pair $color={s.color}><span>T</span></Pair>
        <Advice><button>Appliquer</button><div>Rapport de contraste<b>{s.ratio}</b></div></Advice>
      </Suggestion>
    ))}
    <Disclosure $ruled>Définir un rapport de contraste<Chevron dir="right" /></Disclosure>
    <SaveButton>Enregistrer dans les bibliothèques</SaveButton>
  </Side>
);

const Desktop = () => (
  <Taskbar>
    <Weather>
      <svg width="26" height="30" viewBox="0 0 26 30">
        <circle cx="11" cy="16" r="10" fill="#f5951d" />
        <path d="M12 24a3.500 3.500 0 0 1 1-6.500 4 4 0 0 1 7 .5 3 3 0 0 1 1 6z" fill="#cfe0f7" />
        <circle cx="18" cy="8" r="8" fill="#ff99a4" />
        <text x="18" y="12" textAnchor="middle" fontSize="11" fill="#1c1c1c">1</text>
      </svg>
      <span>17°C<small>Très ensoleillé</small></span>
    </Weather>
    <TaskSlot aria-label="Démarrer">
      <svg width="24" height="24" viewBox="0 0 24 24">
        <defs><linearGradient id="win" x2="1" y2="1"><stop stopColor="#7fe0ff" /><stop offset="1" stopColor="#0a8cf0" /></linearGradient></defs>
        <path d="M0 0h11.500v11.500H0zM12.500 0H24v11.500H12.500zM0 12.500h11.500V24H0zM12.500 12.500H24V24H12.500z" fill="url(#win)" />
      </svg>
    </TaskSlot>
    <TaskSearch><Line w={1.7}><circle cx="8.500" cy="6.500" r="5.300" /><path d="M5 10.500L1.500 14.500" /></Line><input placeholder="Rechercher" aria-label="Rechercher" /></TaskSearch>
    {apps.map((a) => <TaskSlot key={a.name} aria-label={a.name} $open={a.open}>{a.icon}</TaskSlot>)}
    <Tray>
      <TrayButton aria-label="Icônes cachées" $space={8}><Chevron dir="up" size={14} w={1} /></TrayButton>
      <TrayButton aria-label="OneDrive" $space={8}><svg width="16" height="16" viewBox="0 0 16 16"><path d="M4 13a3.500 3.500 0 0 1 0-7 4.500 4.500 0 0 1 8.500 1A3 3 0 0 1 13 13z" fill="#8b8b8b" /><path d="M1 1l14 14" stroke="#1c1c1c" strokeWidth="3" /><path d="M1 1l14 14" stroke="#ddd" strokeWidth="1.200" /></svg></TrayButton>
      <TrayButton aria-label="Wi-Fi"><Line w={1.5}><path d="M1 6.500a10 10 0 0 1 14 0M3.300 9a6.800 6.800 0 0 1 9.400 0M5.500 11.300a3.600 3.600 0 0 1 5 0" /><circle cx="8" cy="13.300" r=".8" fill="currentColor" /></Line></TrayButton>
      <TrayButton aria-label="Volume"><Line w={1.2} d="M1 6v4h2.500L7.500 13.500v-11L3.500 6zM9.500 6c1 1 1 3 0 4M11.500 4c2 2 2 6 0 8M13.500 2.500c2.500 3 2.500 8 0 11" /></TrayButton>
      <TrayButton aria-label="Batterie" $space={8}><Line w={1.3}><rect x="1" y="5" width="12.500" height="8" rx="1.5" /><path d="M15 7.500v3" /><rect x="3" y="7" width="8.500" height="4" fill="currentColor" stroke="none" /><path d="M3.500 0L1 4.500h3L2.500 8" fill="currentColor" /></Line></TrayButton>
      <Clock>08:04<br />15/07/2025</Clock>
    </Tray>
  </Taskbar>
);

export default function App() {
  return (
    <Window>
      <GlobalStyle />
      <BrowserChrome />
      <Viewport>
        <Site>
          <Header />
          <Columns><Workspace /><Sidebar /></Columns>
          <SiteFooter>
            <span>Langue : <a href="#">Français</a></span>
            {footerLinks.map((l) => <a href="#" key={l}>{l}</a>)}
            <AdobeMark href="#">
              <svg width="12" height="10" viewBox="0 0 12 10" fill="currentColor"><path d="M0 0h4.500L0 10zM12 0H7.500L12 10zM6 3.500L8.800 10H7L6.200 8H4.200z" /></svg>
              Adobe
            </AdobeMark>
          </SiteFooter>
        </Site>
        <Scrollbar><ScrollThumb /></Scrollbar>
      </Viewport>
      <Desktop />
    </Window>
  );
}
